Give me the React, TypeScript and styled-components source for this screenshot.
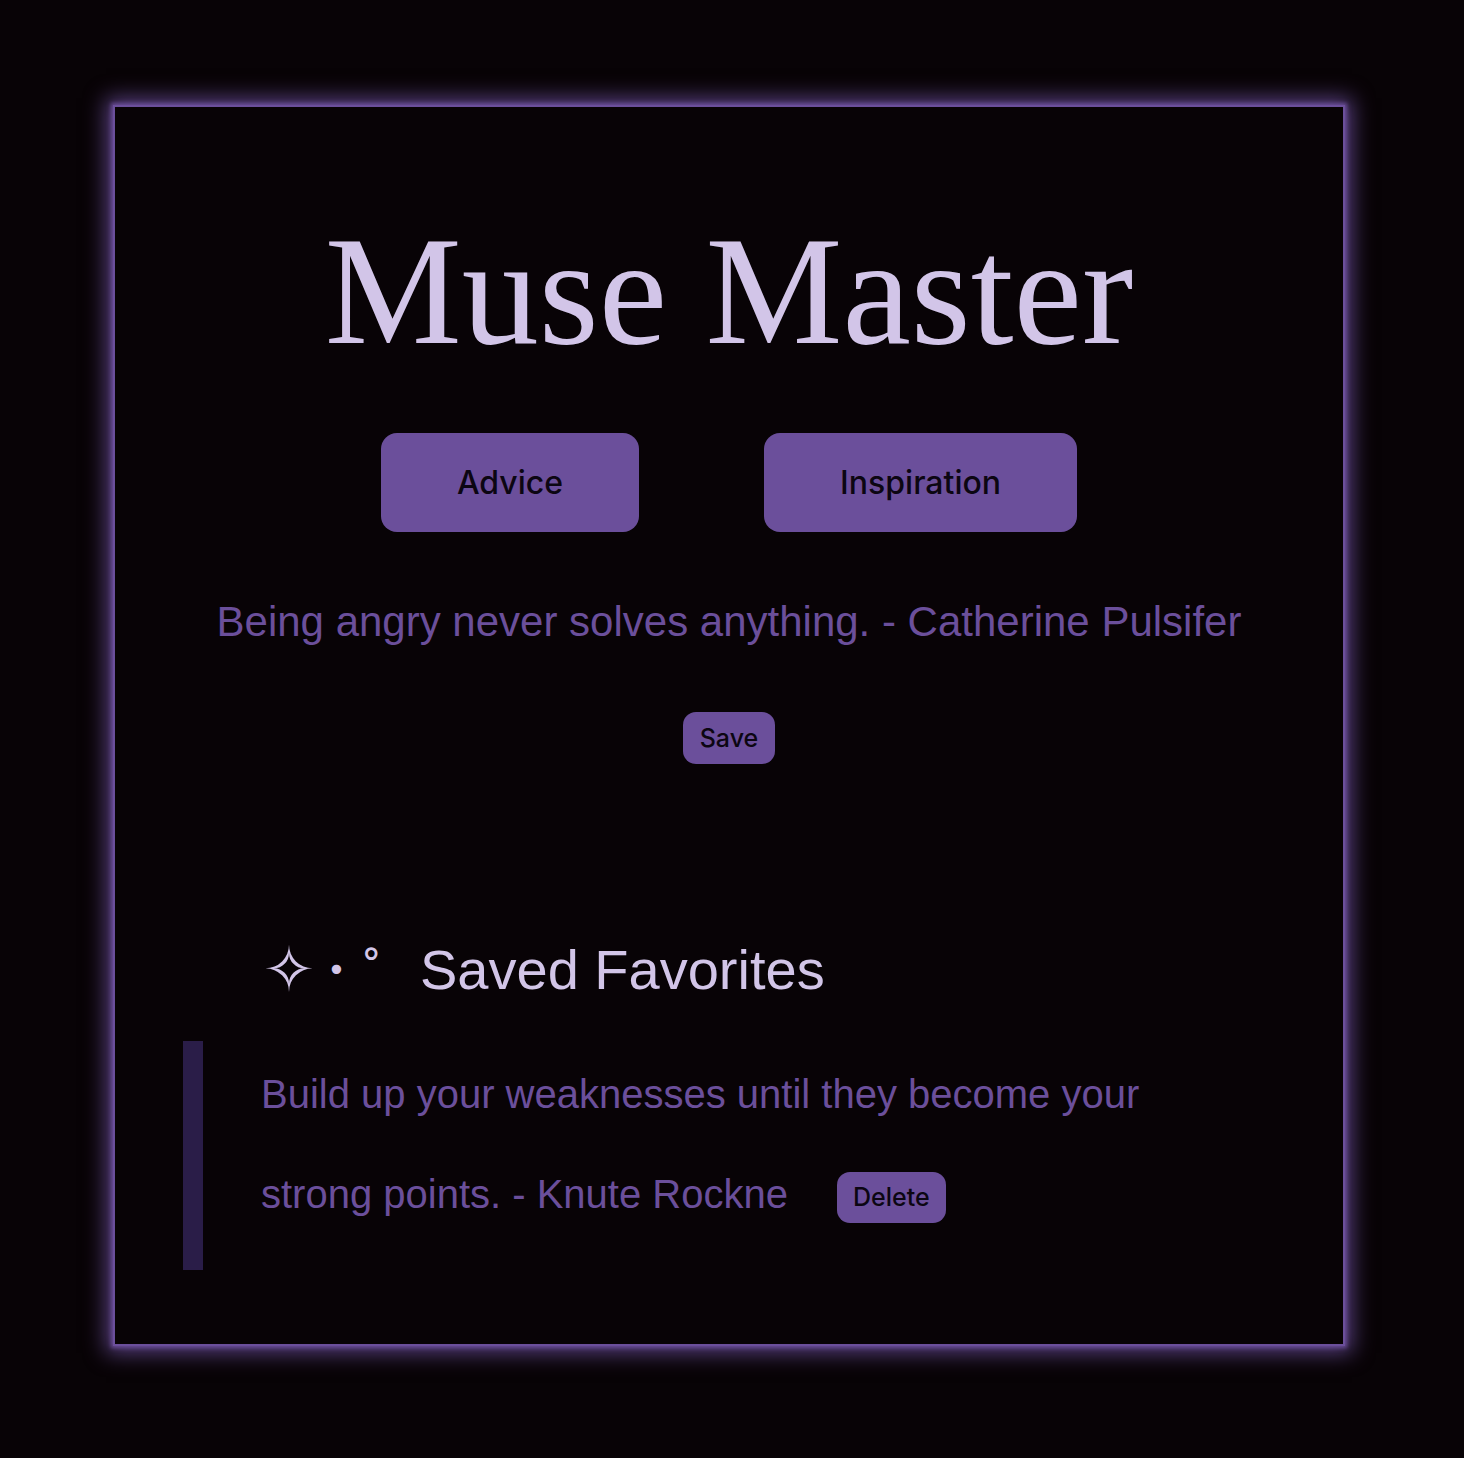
import React from 'react';
import styled, { createGlobalStyle } from 'styled-components';

const colors = {
  page: '#080306',
  purple: '#6b4f9b',
  lilac: '#d2c5e8',
  ink: '#0c0612',
  bar: '#2a1d48',
};

const GlobalStyle = createGlobalStyle`
  html, body {
    margin: 0;
    padding: 0;
    background: ${colors.page};
  }

  body {
    font-family: 'Liberation Sans', Arial, sans-serif;
    padding: 105px 0 112px;
  }
`;

type Favorite = {
  id: number;
  text: string;
};

const favorites: Favorite[] = [
  { id: 1, text: 'Build up your weaknesses until they become your strong points. - Knute Rockne' },
];

function App() {
  return (
    <>
      <GlobalStyle />
      <Frame>
        <Title>Muse Master</Title>

        <Actions>
          <BigButton type="button">Advice</BigButton>
          <BigButton type="button">Inspiration</BigButton>
        </Actions>

        <Quote>Being angry never solves anything. - Catherine Pulsifer</Quote>

        <SmallButton type="button">Save</SmallButton>

        <Favorites>
          <Heading>
            <Sparkles>
              <Star>✧</Star>
              <Dot>•</Dot>
              <Ring>˚</Ring>
            </Sparkles>
            Saved Favorites
          </Heading>

          <List>
            {favorites.map((item) => (
              <Item key={item.id}>
                <span>{item.text}</span>
                <DeleteButton type="button">Delete</DeleteButton>
              </Item>
            ))}
          </List>
        </Favorites>
      </Frame>
    </>
  );
}

export default App;

const Frame = styled.main`
  width: 1228px;
  margin: 0 auto 0 113px;
  border: 2px solid ${colors.purple};
  box-shadow:
    0 0 4px 2px rgba(107, 79, 155, 0.9),
    0 0 20px 7px rgba(107, 79, 155, 0.8);
  padding: 107px 0 74px;
  display: flex;
  flex-direction: column;
  align-items: center;
`;

const Title = styled.h1`
  margin: 0;
  font-family: 'Liberation Serif', 'Times New Roman', serif;
  font-weight: 400;
  font-size: 154px;
  line-height: 154px;
  color: ${colors.lilac};
`;

const Actions = styled.div`
  margin-top: 65px;
  display: flex;
  gap: 125px;
`;

const BigButton = styled.button`
  height: 99px;
  padding: 0 76px;
  border: none;
  border-radius: 16px;
  background: ${colors.purple};
  color: ${colors.ink};
  font-family: Inter, 'Noto Sans', sans-serif;
  font-weight: 500;
  font-size: 32px;
`;

const Quote = styled.p`
  margin: 66px 0 0;
  font-size: 42px;
  color: ${colors.purple};
`;

const SmallButton = styled.button`
  margin-top: 66px;
  height: 52px;
  padding: 0 17px;
  border: none;
  border-radius: 13px;
  background: ${colors.purple};
  color: ${colors.ink};
  font-family: Inter, 'Noto Sans', sans-serif;
  font-weight: 500;
  font-size: 25px;
`;

const Favorites = styled.section`
  align-self: stretch;
  margin-top: 174px;
  padding: 0 68px;
`;

const Heading = styled.h2`
  margin: 0 0 0 80px;
  display: flex;
  align-items: center;
  font-weight: 400;
  font-size: 56px;
  line-height: 64px;
  color: ${colors.lilac};
`;

const Sparkles = styled.span`
  display: flex;
  align-items: center;
  width: 157px;
  font-family: 'DejaVu Sans', sans-serif;
`;

const Star = styled.span`
  font-size: 62px;
  font-weight: 700;
`;

const Dot = styled.span`
  margin-left: 12px;
  font-size: 32px;
`;

const Ring = styled.span`
  margin-left: 14px;
  font-size: 46px;
  transform: translateY(2px);
`;

const List = styled.ul`
  list-style: none;
  margin: 39px 0 0;
  padding: 0;
`;

const Item = styled.li`
  border-left: 20px solid ${colors.bar};
  padding: 3px 60px 26px 58px;
  font-size: 40px;
  line-height: 100px;
  color: ${colors.purple};
`;

const DeleteButton = styled.button`
  margin-left: 49px;
  height: 51px;
  padding: 0 16px;
  border: none;
  border-radius: 13px;
  background: ${colors.purple};
  color: ${colors.ink};
  font-family: Inter, 'Noto Sans', sans-serif;
  font-weight: 500;
  font-size: 25px;
  vertical-align: middle;
`;
